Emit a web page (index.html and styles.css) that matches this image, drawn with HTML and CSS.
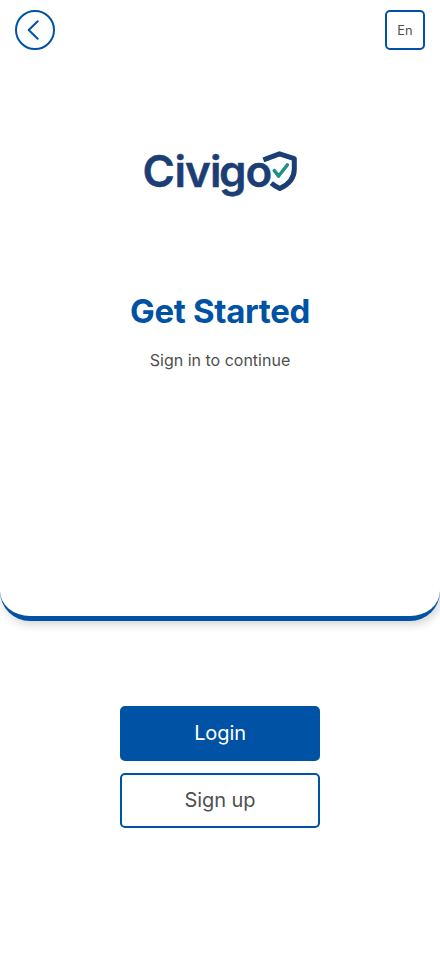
FILE: index.html
```html
<!DOCTYPE html>
<html lang="en">
<head>
<meta charset="utf-8">
<meta name="viewport" content="width=device-width, initial-scale=1">
<title>Civigo</title>
<link rel="stylesheet" href="styles.css">
</head>
<body>
<main class="screen">
  <section class="panel">
    <header class="bar">
      <button class="back" aria-label="Back">
        <svg width="36" height="36" viewBox="0 0 36 36"><path d="M20.7 9.2 11.7 18l9 8.8"/></svg>
      </button>
      <button class="lang">En</button>
    </header>
    <svg class="logo" width="160" height="60" viewBox="140 145 160 60">
      <text class="wordmark" y="187" x="158.7 180.3 198 215.7 232.8 259">Civigo</text>
      <path class="shield" d="M263.4 159.8 279.5 153.8 294.3 158.6V169C294.3 179 288 184.8 279.8 188.5Q275 186.4 271.3 183.2"/>
      <path class="check" d="M274.3 170.7 278.6 176 287.3 165"/>
    </svg>
    <h1 class="title">Get Started</h1>
    <p class="subtitle">Sign in to continue</p>
  </section>
  <div class="actions">
    <button class="btn primary">Login</button>
    <button class="btn">Sign up</button>
  </div>
</main>
</body>
</html>
```
FILE: styles.css
```css
* { box-sizing: border-box; }
body { margin: 0; background: #fff; font-family: Inter, sans-serif; color: #4f4f4f; }
button { font: inherit; color: inherit; background: #fff; border: 2px solid #0052a5; padding: 0; }
.screen { height: 956px; overflow: hidden; }
.panel {
  height: 621px;
  display: flex;
  flex-direction: column;
  align-items: center;
  background: #fff;
  border-bottom: 5px solid #0052a5;
  border-radius: 0 0 30px 30px;
  box-shadow: 2px 4px 8px rgba(0, 0, 0, .16);
}
.bar { width: 100%; padding: 10px 15px; display: flex; justify-content: space-between; }
.back { width: 40px; height: 40px; border-radius: 50%; }
.back svg { display: block; fill: none; stroke: #0052a5; stroke-width: 2; stroke-linecap: round; stroke-linejoin: round; }
.lang { width: 40px; height: 40px; border-radius: 5px; font-size: 12.8px; font-weight: 400; }
.logo { margin-top: 85px; flex: none; overflow: visible; }
.wordmark { font: 600 44px Inter, sans-serif; fill: #1b3e75; stroke: #1b3e75; stroke-width: .4; text-anchor: middle; }
.shield { fill: none; stroke: #1b3e75; stroke-width: 5; stroke-linejoin: round; }
.check { fill: none; stroke: #219188; stroke-width: 3.6; stroke-linecap: round; stroke-linejoin: round; }
.title { margin: 86px 0 0; font-size: 33px; line-height: 40px; font-weight: 700; letter-spacing: -.35px; color: #0052a5; }
.subtitle { margin: 19px 0 0; font-size: 16px; line-height: 20px; }
.actions { margin-top: 85px; display: flex; flex-direction: column; align-items: center; gap: 12px; }
.btn { width: 200px; height: 55px; border-radius: 5px; font-size: 20px; font-weight: 400; letter-spacing: -.1px; padding-bottom: 1px; }
.primary { background: #0052a5; color: #fff; }
```
